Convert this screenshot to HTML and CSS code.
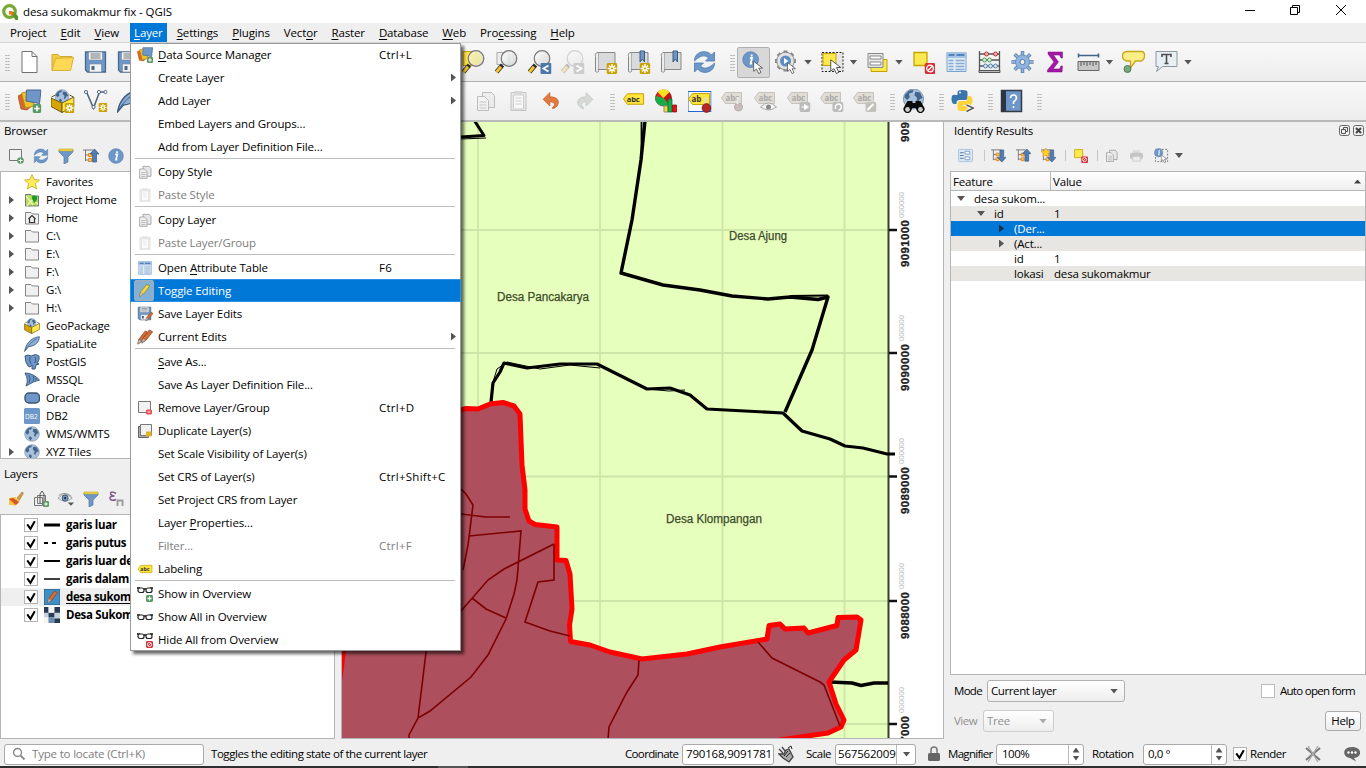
FILE: index.html
```html
<!DOCTYPE html>
<html lang="en">
<head>
<meta charset="utf-8">
<title>desa sukomakmur fix - QGIS</title>
<link rel="stylesheet" href="styles.css">
</head>
<body>
<svg class="defs" width="0" height="0">
<defs>
<linearGradient id="glass" x1="0" y1="0" x2="1" y2="1"><stop offset="0" stop-color="#fff"/><stop offset="1" stop-color="#cfd3d3"/></linearGradient>
<symbol id="new" viewBox="0 0 24 24"><path d="M4.500 1.500h10l5 5v16h-15z" fill="#fff" stroke="#707070"/><path d="M14.500 1.500v5h5" fill="none" stroke="#707070"/></symbol>
<symbol id="open" viewBox="0 0 24 24"><path d="M1.500 20V4.500h6l2 2h12V10" fill="#f2cb45" stroke="#d0a92f"/><path d="M1.500 20.500L5 8.500l18-1-3 13z" fill="#ffd955" stroke="#d9b236"/></symbol>
<symbol id="save" viewBox="0 0 24 24"><path d="M2 2h20v20H4l-2-2z" fill="#6c97c8" stroke="#4b688b" stroke-width="1.300"/><path d="M5 2h14v8H5zM6 14h12v8H6z" fill="#f3f3f3" stroke="#75879a" stroke-width=".6"/><path d="M7 4h10M7 6h10M7 8h10" stroke="#74777a"/><path d="M8 16h3v4H8z" fill="#4b688b"/></symbol>
<symbol id="plus" viewBox="0 0 10 10"><rect width="10" height="10" rx="2" fill="#5a9a63"/><path d="M5 2v6M2 5h6" stroke="#fff" stroke-width="1.800"/></symbol>
<symbol id="star" viewBox="0 0 10 10"><rect width="10" height="10" rx="1.500" fill="#c9a200"/><path d="M5 1v8M1 5h8M2.300 2.300l5.400 5.400M7.700 2.300L2.300 7.700" stroke="#fff" stroke-width="1.300"/><circle cx="5" cy="5" r="1" fill="#c9a200"/></symbol>
<symbol id="forbid" viewBox="0 0 10 10"><rect width="10" height="10" rx="2" fill="#d32f35"/><circle cx="5" cy="5" r="3" fill="none" stroke="#fff" stroke-width="1.200"/><path d="M3 7l4-4" stroke="#fff" stroke-width="1.200"/></symbol>
<symbol id="dsm" viewBox="0 0 24 24"><path d="M.5 7l8-4 8 12-7 6-6-1z" fill="#d5692b" stroke="#a34a17" stroke-width=".7"/><path d="M4 4l9-2 4 15-9 2z" fill="#f0c428" stroke="#a88510" stroke-width=".7"/><path d="M9 1h14.500l-1.500 13.500L8.500 12z" fill="#6c97c8" stroke="#4b688b"/><use href="#plus" x="15" y="15" width="9" height="9"/></symbol>
<symbol id="globe" viewBox="0 0 24 24"><circle cx="12" cy="12" r="11" fill="#a9c0da" stroke="#7b93ad"/><path d="M3 7l4-4 5-1-1 3-4 1 1 4-3 3-3-3zM14 4l5 1 3 6-3 1-2 4-2-1 1-4-3-3zM9 15l3 3-2 4-3-4z" fill="#42648d"/></symbol>
<symbol id="geopkg" viewBox="0 0 24 24"><use href="#globe" x="4" y="0" width="15" height="15"/><path d="M.5 9l11 5v9.500l-11-6z" fill="#d6a500" stroke="#6b5718"/><path d="M11.500 14L23.500 8v9l-12 6.500z" fill="#ffe84a" stroke="#6b5718"/><path d="M1 8l4-2M23 8l-4-2" stroke="#6b5718"/></symbol>
<symbol id="newgeo" viewBox="0 0 24 24"><use href="#geopkg" width="24" height="24"/><use href="#star" x="14" y="14" width="10" height="10"/></symbol>
<symbol id="vec" viewBox="0 0 24 24"><path d="M3 3l7 16L16 3h6" fill="none" stroke="#50677e" stroke-width="1.600"/><g fill="#fff" stroke="#50677e"><circle cx="2.500" cy="3" r="1.600"/><circle cx="10" cy="18" r="1.600"/><circle cx="15.500" cy="3" r="1.600"/><circle cx="22" cy="3" r="1.600"/></g><use href="#star" x="15" y="14" width="9" height="9"/></symbol>
<symbol id="feather" viewBox="0 0 24 24"><path d="M1 23C3 12 9 3 23 1c0 8-6 14-16 15z" fill="#8db0d6" stroke="#3f5c7d" stroke-width="1.300"/><path d="M1 23C6 14 11 9 19 4" fill="none" stroke="#3f5c7d"/></symbol>
<symbol id="lens" viewBox="0 0 24 24"><path d="M2 22l6-7" stroke="#2c2c2c" stroke-width="4.500"/><path d="M2 22l4.500-5.200" stroke="#f3c529" stroke-width="3"/><circle cx="14.500" cy="8.500" r="7.800" fill="url(#glass)" fill-opacity=".85" stroke="#777" stroke-width="1.200"/></symbol>
<symbol id="zlayer" viewBox="0 0 24 24"><path d="M1.500 1.500h14v14h-14z" fill="#ffe548" stroke="#c9a200"/><use href="#lens" width="24" height="24"/><circle cx="14.500" cy="8.500" r="6.500" fill="#f6ec8c" opacity=".6"/></symbol>
<symbol id="znative" viewBox="0 0 24 24"><path d="M2.500 2.500h12v12h-12z" fill="#eee" stroke="#aaa"/><use href="#lens" width="24" height="24"/></symbol>
<symbol id="zlast" viewBox="0 0 24 24"><use href="#lens" width="24" height="24"/><rect x="13" y="13" width="11" height="11" rx="1" fill="#4b78a9"/><path d="M21 15.500l-5 3 5 3" fill="none" stroke="#fff" stroke-width="1.800"/></symbol>
<symbol id="znext" viewBox="0 0 24 24"><g opacity=".28"><use href="#lens" width="24" height="24"/></g><rect x="13" y="13" width="11" height="11" rx="1" fill="#ccc"/><path d="M16 15.500l5 3-5 3" fill="none" stroke="#fff" stroke-width="1.800"/></symbol>
<symbol id="book" viewBox="0 0 24 24"><path d="M4.500 2.500h17v17h-17z" fill="#d9dadb" stroke="#888"/><path d="M4.500 2.500c-3 0-3 3-2.500 4v15c3 2 4-1 2.500-2" fill="#ececec" stroke="#888"/></symbol>
<symbol id="bmmap" viewBox="0 0 24 24"><use href="#book" width="24" height="24"/><use href="#star" x="13" y="13" width="11" height="11"/></symbol>
<symbol id="bmk" viewBox="0 0 24 24"><use href="#book" width="24" height="24"/><path d="M13.500 1h4.500v11l-2.200-3-2.300 3z" fill="#6c97c8" stroke="#3c5a7e"/></symbol>
<symbol id="bmnew" viewBox="0 0 24 24"><use href="#bmk" width="24" height="24"/><use href="#star" x="13" y="13" width="11" height="11"/></symbol>
<symbol id="refresh" viewBox="0 0 24 24"><path d="M2 11C2 1 14-1 19 5l3-3v9h-9l3-3c-4-4-9-2-14 3zM22 13c0 10-12 12-17 6l-3 3v-9h9l-3 3c4 4 9 2 14-3z" fill="#6c97c8" stroke="#4c78ac" stroke-width=".8"/></symbol>
<symbol id="cursor" viewBox="0 0 12 12"><path d="M1 1v9l2.500-2 2 4 2-1-2-3.800H9z" fill="#fff" stroke="#555" stroke-width=".8"/></symbol>
<symbol id="info" viewBox="0 0 24 24"><circle cx="12" cy="12" r="11" fill="#6c97c8" stroke="#5782b3"/><path d="M11 9.500h3l-2 8h2M13.500 5v2.500" fill="none" stroke="#fff" stroke-width="2.500"/></symbol>
<symbol id="identify" viewBox="0 0 24 24"><use href="#info" width="18" height="18"/><use href="#cursor" x="11" y="9" width="14" height="15"/></symbol>
<symbol id="gear" viewBox="0 0 24 24"><g stroke="#5579a7" stroke-width="3.500"><path d="M12 1v22M1 12h22M4.200 4.200l15.600 15.600M19.800 4.200L4.200 19.800"/></g><g stroke="#8fb3de" stroke-width="2"><path d="M12 1.500v21M1.500 12h21M4.500 4.500l15 15M19.500 4.500l-15 15"/></g><circle cx="12" cy="12" r="7" fill="#8fb3de" stroke="#6d94c4"/><circle cx="12" cy="12" r="2.500" fill="#f3f3f3" stroke="#5579a7"/></symbol>
<symbol id="action" viewBox="0 0 24 24"><g stroke="#888" stroke-width="4"><path d="M11 .5v21M.5 11h21M3.600 3.600l14.800 14.800M18.400 3.600L3.600 18.400"/></g><circle cx="11" cy="11" r="8.800" fill="#e2e2e2" stroke="#8c8c8c"/><circle cx="11" cy="11" r="5.500" fill="#5d8dc2"/><path d="M9.500 8l4.500 3-4.500 3z" fill="#fff"/><use href="#cursor" x="12" y="11" width="12" height="13"/></symbol>
<symbol id="select" viewBox="0 0 24 24"><path d="M1.500 2.500h21v19h-21z" fill="#e6e6e6" stroke="#222" stroke-dasharray="2 1.500"/><path d="M2.500 3.500h13v12h-13z" fill="#fce94f" stroke="#c9a200"/><use href="#cursor" x="9" y="8" width="15" height="16"/></symbol>
<symbol id="selform" viewBox="0 0 24 24"><path d="M5.500 9.500h16v12h-16z" fill="#fce94f" stroke="#c9a200"/><path d="M2.500 3.500h15v14h-15z" fill="#e8e8e8" stroke="#888"/><path d="M4.500 6h11v3h-11zM4.500 12h11v3h-11z" fill="#fff" stroke="#888"/></symbol>
<symbol id="desel" viewBox="0 0 24 24"><path d="M2.500 2.500h13v13h-13z" fill="#fce94f" stroke="#c9a200" stroke-width="1.300"/><use href="#forbid" x="13" y="13" width="11" height="11"/></symbol>
<symbol id="table" viewBox="0 0 24 24"><path d="M2.500 2.500h19v19h-19z" fill="#e1edf5" stroke="#7ba3cf"/><path d="M2 2h20v6H2z" fill="#a5c4e5"/><path d="M4 5h6M12 5h8" stroke="#5482b8" stroke-width="2"/><path d="M4 10.500h5M11 10.500h9M4 13.500h5M11 13.500h9M4 16.500h5M11 16.500h9M4 19.500h5M11 19.500h9" stroke="#86aad4" stroke-width="1.300"/></symbol>
<symbol id="abacus" viewBox="0 0 24 24"><path d="M2 1v20M22 1v20M2 4h20M2 10h20M2 16h20" fill="none" stroke="#555" stroke-width="1.300"/><path d="M1.500 20.500h21v2h-21z" fill="#bbb" stroke="#555"/><g stroke="#b42b2b" fill="#f5b4b4"><circle cx="9" cy="4" r="2"/><circle cx="18" cy="4" r="2"/></g><g stroke="#579559" fill="#d3efd3"><circle cx="7" cy="10" r="2"/><circle cx="12" cy="10" r="2"/></g><g stroke="#5482a8" fill="#d3e5f3"><circle cx="8" cy="16" r="2"/><circle cx="13" cy="16" r="2"/><circle cx="18" cy="16" r="2"/></g></symbol>
<symbol id="sigma" viewBox="0 0 24 24"><path d="M4.500 2H19v6h-1.500L16 5h-6l5 7-5.500 7h6.500l1.500-3H19l-.5 6H4v-2l6.500-8-6-8z" fill="#a616a8" stroke="#6d0f6e" stroke-width=".5"/></symbol>
<symbol id="ruler" viewBox="0 0 24 24"><path d="M2 5.500h20M2 3.500v4M22 3.500v4" stroke="#426287" stroke-width="1.600"/><path d="M1.500 11.500h21v9h-21z" fill="#c7c7c7" stroke="#666"/><path d="M4.500 12v4M7.500 12v3M10.500 12v4M13.500 12v3M16.500 12v4M19.500 12v3" stroke="#555"/></symbol>
<symbol id="tip" viewBox="0 0 24 24"><path d="M5 1.500h15q3 0 3 4t-3 5.500h-6l-5 7v-7H5q-4-1-4-5t4-4.500z" fill="#fbee87" stroke="#c6a51d" stroke-width="1.300"/><circle cx="6" cy="19" r="3.500" fill="#78a97a" stroke="#4d7d50"/></symbol>
<symbol id="textann" viewBox="0 0 24 24"><path d="M1.500 1.500h21v15H8l-6 5 2-5H1.500z" fill="#e9f0f4" stroke="#8b969d"/><path d="M7.500 7V4.500h9V7M12 4.500v9M10 13.500h4" fill="none" stroke="#4d4d4d" stroke-width="1.600"/></symbol>
<symbol id="copy" viewBox="0 0 24 24"><path d="M9 3.500h9l3 3v12H9z" fill="#e7e7e7" stroke="#888"/><path d="M4 7.500h7l4 4v10H4z" fill="#f3f3f3" stroke="#888"/><path d="M6 13h7M6 16h7M6 19h7" stroke="#999"/></symbol>
<symbol id="paste" viewBox="0 0 24 24"><path d="M4.500 3.500h15v18h-15z" fill="#ddd" stroke="#999"/><path d="M7 6h10v14H7z" fill="#fff" stroke="#aaa"/><path d="M8 2h8v3H8z" fill="#bbb"/><path d="M9 9h6M9 12h6M9 15h6" stroke="#aaa"/></symbol>
<symbol id="undo" viewBox="0 0 24 24"><path d="M2 10l8-8v5c8 0 11 4 10 8-1 4-4 6-7 6l1-2c3-2 2-6-4-6v5z" fill="#e07a3f" stroke="#c86228"/></symbol>
<symbol id="redo" viewBox="0 0 24 24"><path d="M22 10l-8-8v5C6 7 3 11 4 15c1 4 4 6 7 6l-1-2c-3-2-2-6 4-6v5z" fill="#d5dad6" stroke="#c3c9c4"/></symbol>
<symbol id="tag" viewBox="0 0 24 24"><path d="M1.500 12l4-5.500h17v11h-17z" fill="#ffe43d" stroke="#c5a300"/><text x="5" y="15" class="icon-text">abc</text></symbol>
<symbol id="diagram" viewBox="0 0 24 24"><circle cx="9" cy="9" r="8" fill="#f02018" stroke="#222" stroke-width=".6"/><path d="M9 9V1A8 8 0 0 1 15 14z" fill="#c41212"/><path d="M9 9L1 7A8 8 0 0 0 14 15z" fill="#18ab48"/><path d="M9 9L3 3a8 8 0 0 1 12 0z" fill="#f7df22"/><path d="M9.500 17h4v6h-4z" fill="#f7df22" stroke="#987"/><path d="M13.500 10h4v13h-4z" fill="#18ab48" stroke="#064" stroke-width=".7"/><path d="M18 16h4v7h-4z" fill="#e31414" stroke="#800" stroke-width=".7"/></symbol>
<symbol id="pinlabel" viewBox="0 0 24 24"><rect x=".5" y="2.500" width="23" height="20" fill="#fbfbfb" stroke="#1e66d0"/><path d="M1 10l4-5.500h17v11H5z" fill="#ffe43d" stroke="#c5a300"/><text x="4" y="13" class="icon-text">ab</text><path d="M18 8v9" stroke="#ddd" stroke-width="2"/><circle cx="19" cy="19" r="4.300" fill="#b52727" stroke="#841919"/></symbol>
<symbol id="gtag" viewBox="0 0 24 24"><path d="M1 9l4-5.500h16v11H5z" fill="#dfddd5" stroke="#c4c2ba"/><text x="5" y="12" class="icon-text faint">abc</text></symbol>
<symbol id="gpin" viewBox="0 0 24 24"><use href="#gtag" width="24" height="24"/><circle cx="18" cy="18" r="4" fill="#cbbcbc" stroke="#b8abab"/><path d="M17 8v7" stroke="#eee" stroke-width="2"/></symbol>
<symbol id="geye" viewBox="0 0 24 24"><use href="#gtag" width="24" height="24"/><path d="M7 18q8-8 16 0q-8 6-16 0z" fill="#f4f4f4" stroke="#aaa"/><circle cx="15" cy="18" r="2.500" fill="#888"/></symbol>
<symbol id="gmove" viewBox="0 0 24 24"><use href="#gtag" width="24" height="24"/><rect x="13" y="13" width="11" height="10" rx="2" fill="#bbb"/><path d="M15 18h4M18 15.500l4 2.500-4 2.500z" fill="#fff" stroke="#fff"/></symbol>
<symbol id="grot" viewBox="0 0 24 24"><use href="#gtag" width="24" height="24"/><rect x="13" y="13" width="11" height="10" rx="2" fill="#bbb"/><path d="M16 20v-3a3 3 0 1 1 3 4" fill="none" stroke="#fff" stroke-width="1.500"/></symbol>
<symbol id="gedit" viewBox="0 0 24 24"><use href="#gtag" width="24" height="24"/><rect x="13" y="13" width="11" height="10" rx="2" fill="#c2c1bb"/><path d="M15 21l6-6" stroke="#fff" stroke-width="2"/></symbol>
<symbol id="search3" viewBox="0 0 24 24"><use href="#globe" x="1" y="-1" width="22" height="22"/><path d="M6 12h5v2h3v-2h5l4 7a4 4 0 1 1-8 2l-1-2h-3l-1 2a4 4 0 1 1-8-2z" fill="#0b0b0b"/><circle cx="6" cy="20.500" r="2.400" fill="#ccc"/><circle cx="19" cy="20.500" r="2.400" fill="#ccc"/></symbol>
<symbol id="python" viewBox="0 0 24 24"><path d="M7 6V3q0-2 5-2t5 2v6q0 2-2 2H9q-3 0-3 3v1H4q-3 0-3-5t4-4h7" fill="#3a76ab"/><path d="M17 7h2q3 0 3 5t-4 4h-6v1h5v3q0 2-5 2t-5-2v-5q0-3 3-3h5q2 0 2-3z" fill="#ffd43b"/><circle cx="9.500" cy="3.500" r=".9" fill="#fff"/><path d="M16 16l7 3-7 3.500" fill="none" stroke="#fff" stroke-width="3"/><path d="M16 16l7 3-7 3.500" fill="none" stroke="#555" stroke-width="1.400"/></symbol>
<symbol id="help" viewBox="0 0 24 24"><path d="M2 1.500h20v21H2z" fill="#6c97c8" stroke="#333b46" stroke-width="1.500"/><path d="M2 1.500h4.500v21H2z" fill="#2c3543"/><path d="M11 9q0-3 3-3t3 3q0 2-3 4v2M14 17v2" fill="none" stroke="#fff" stroke-width="1.600"/></symbol>
<symbol id="addsq" viewBox="0 0 16 16"><path d="M1.500 1.500h12v11h-12z" fill="#f2f2f2" stroke="#777"/><circle cx="12.500" cy="12.500" r="3.300" fill="#5a9a63"/><path d="M12.500 10.500v4M10.500 12.500h4" stroke="#fff"/></symbol>
<symbol id="filter" viewBox="0 0 16 16"><path d="M1 2h14v2L10 9v5l-4 2V9L1 4z" fill="#6c97c8" stroke="#55799f" stroke-width=".7"/><path d="M1 1h14v2H1z" fill="#f5d946" stroke="#b9a12a" stroke-width=".6"/></symbol>
<symbol id="treebits" viewBox="0 0 16 16"><path d="M0 2h10M2.500 2v11M2.500 7H6M2.500 12H6" fill="none" stroke="#777"/><path d="M5.500 5.500h3v3h-3zM5.500 10.500h3v3h-3z" fill="#ffca72" stroke="#e98719"/></symbol>
<symbol id="collapse" viewBox="0 0 16 16"><use href="#treebits" width="16" height="16"/><path d="M11.500 1L16 6h-2.500v8h-4V6H7z" fill="#4f7cb3" stroke="#375a85" stroke-width=".7"/></symbol>
<symbol id="expand" viewBox="0 0 16 16"><use href="#treebits" width="16" height="16"/><path d="M11.500 15L16 10h-2.500V2h-4v8H7z" fill="#4f7cb3" stroke="#375a85" stroke-width=".7"/></symbol>
<symbol id="expnew" viewBox="0 0 16 16"><use href="#expand" width="16" height="16"/><path d="M5 0l1.500 3 3.500.5-2.500 2.300.6 3.200L5 7.500 2 9l.5-3.200L0 3.500 3.500 3z" fill="#ffd42b" stroke="#ef8f13" stroke-width=".6"/></symbol>
<symbol id="fav" viewBox="0 0 16 16"><path d="M8 .5l2.200 5 5.300.5-4 3.600 1.200 5.400L8 12.200 3.300 15l1.200-5.400-4-3.600 5.300-.5z" fill="#fcec5b" stroke="#c9a51d" stroke-width=".8"/></symbol>
<symbol id="folder" viewBox="0 0 16 16"><path d="M1.500 14V2.500h5.500l1.500 1.500h6V14z" fill="#f0f0f0" stroke="#858585"/></symbol>
<symbol id="phome" viewBox="0 0 16 16"><path d="M1.500 14V2.500h5.500l1.500 1.500h6V14z" fill="#b6dd61" stroke="#777"/><path d="M2 4l7 9M3 14l5-6 6 4" stroke="#f4f5b0" stroke-width="1.300" fill="none"/><path d="M10.500 11C6 5 8 3.500 10.500 3.500S15 6 10.500 11z" fill="#1d9c25"/></symbol>
<symbol id="home" viewBox="0 0 16 16"><use href="#folder" width="16" height="16"/><path d="M4.500 9L8 5.500 11.500 9M5.500 8.500v4h5v-4" fill="none" stroke="#333" stroke-width="1.200"/></symbol>
<symbol id="eleph" viewBox="0 0 16 16"><path d="M1 2q3-2 6 0 5-3 8 0 1 4-2 7l2 1-3 1-1 4H8V11L6 13 4 12Q1 8 1 2z" fill="#6c97c8" stroke="#3f5c7d"/><path d="M6 3q-1 4 1 7M11 3q2 3 0 6" fill="none" stroke="#3f5c7d"/></symbol>
<symbol id="mssql" viewBox="0 0 16 16"><path d="M1 1Q9 1 15.500 8 10 9 2 14 5 8 1 1z" fill="#6c97c8" stroke="#3f5c7d"/><path d="M5 3q2 4 0 8M9 4q2 3 0 5M12 6v2" fill="none" stroke="#3f5c7d"/></symbol>
<symbol id="oracle" viewBox="0 0 16 16"><rect x="1" y="3" width="14.500" height="10" rx="4" fill="#6c97c8" stroke="#3b5472" stroke-width="1.400"/></symbol>
<symbol id="db2" viewBox="0 0 16 16"><rect width="16" height="16" rx="1.500" fill="#6c97c8"/><text x="1" y="10.500" class="db2-text">DB2</text></symbol>
<symbol id="pencil" viewBox="0 0 16 16"><path d="M3 15l1-5 7-9 3.500 2-7 9z" fill="#f3d648" stroke="#8f7a22" stroke-width=".8"/><path d="M3 15l1-5 3 2z" fill="#d9d0b0" stroke="#777" stroke-width=".5"/></symbol>
<symbol id="rpencil" viewBox="0 0 16 16"><path d="M3 15l1-5 7-9 3.500 2-7 9z" fill="#cf6c37" stroke="#8d4421" stroke-width=".8"/><path d="M3 15l1-5 3 2z" fill="#bfc2c2" stroke="#777" stroke-width=".5"/></symbol>
<symbol id="edits" viewBox="0 0 16 16"><use href="#rpencil" x="-2" y="1" width="15" height="15"/><use href="#rpencil" x="2" y="0" width="15" height="15"/></symbol>
<symbol id="savee" viewBox="0 0 16 16"><use href="#save" width="15" height="15"/><use href="#rpencil" x="7" y="5" width="10" height="11"/></symbol>
<symbol id="remove" viewBox="0 0 16 16"><path d="M1.500 1.500h12v11h-12z" fill="#f2f2f2" stroke="#777"/><rect x="9" y="9.500" width="6" height="5" rx="1.500" fill="#e94a50"/><path d="M10.500 12h3" stroke="#fff"/></symbol>
<symbol id="dup" viewBox="0 0 16 16"><path d="M1.500 3.500h10v11h-10z" fill="#aaa" stroke="#666"/><path d="M3.500 1.500h11v11h-11z" fill="#f2f2f2" stroke="#777"/><path d="M9 8.500h5.500v5H9z" fill="#ddb421"/></symbol>
<symbol id="glasses" viewBox="0 0 16 16"><path d="M0 6h3M7 7h2M13 6h3" stroke="#111" stroke-width="1.300" fill="none"/><rect x="1" y="6" width="6" height="4.500" rx="2" fill="#fff" stroke="#222" stroke-width="1.200"/><rect x="9" y="6" width="6" height="4.500" rx="2" fill="#fff" stroke="#222" stroke-width="1.200"/></symbol>
<symbol id="showov" viewBox="0 0 16 16"><use href="#glasses" y="-4" width="16" height="16"/><use href="#plus" x="9" y="9" width="7" height="7"/></symbol>
<symbol id="hideov" viewBox="0 0 16 16"><use href="#glasses" y="-4" width="16" height="16"/><use href="#forbid" x="9" y="9" width="7" height="7"/></symbol>
<symbol id="brush" viewBox="0 0 16 16"><path d="M9 7l5-6 1.500 1-4 7z" fill="#d49a3e" stroke="#9d6d20" stroke-width=".5"/><path d="M1 7l6-1 5 4-5 5-2-1-4 0z" fill="#f2c23a"/><path d="M1 8l4-1 6 4-3 3z" fill="#d9502b"/></symbol>
<symbol id="addgrp" viewBox="0 0 16 16"><path d="M1.500 6.500h8v8h-8zM4.500 4.500h8v8h-8z" fill="#eee" stroke="#777"/><path d="M7 12V3l2-3 2 3v9" fill="none" stroke="#555"/><use href="#plus" x="10" y="10" width="6" height="6"/></symbol>
<symbol id="eye" viewBox="0 0 18 16"><path d="M0 7Q8-1 16 7 8 14 0 7z" fill="#eee" stroke="#999"/><path d="M1 4q7-5 14 1" fill="none" stroke="#888"/><circle cx="8" cy="7" r="3.500" fill="#6c97c8" stroke="#456"/><circle cx="8" cy="7" r="1.200" fill="#222"/><path d="M11 12h7l-3.500 3.500z" fill="#555"/></symbol>
<symbol id="eps" viewBox="0 0 16 16"><path d="M8 2.500Q3-.5 2.500 2.500q0 2 4 2.500-5 0-4.500 2.500 1 3 6 1" fill="none" stroke="#7c5a86" stroke-width="1.500"/><path d="M9.500 15V9.500h5V15M9.500 12v3M14.500 12v3" fill="none" stroke="#999" stroke-width="1.800"/></symbol>
<symbol id="formv" viewBox="0 0 16 16"><rect x=".5" y="1.500" width="15" height="13" rx="1" fill="#dce8f4" stroke="#a9c2dd"/><path d="M2 5h4M2 8h4M2 11h4" stroke="#57799f"/><path d="M7.500 3.500h5v3h-5zM7.500 9.500h5v3h-5z" fill="#fff" stroke="#7f9fc2"/></symbol>
<symbol id="print" viewBox="0 0 16 16"><path d="M4 2h8v4H4z" fill="#ddd"/><rect x="1" y="5" width="14" height="7" rx="2.500" fill="#c4c4c4"/><path d="M4 9h8v5H4z" fill="#ececec" stroke="#ccc"/></symbol>
<symbol id="idsel" viewBox="0 0 16 16"><path d="M1.500 1.500h13v13h-13z" fill="none" stroke="#777" stroke-dasharray="2 1.500"/><use href="#info" width="10" height="10"/><use href="#cursor" x="7" y="6" width="9" height="10"/></symbol>
<symbol id="raster" viewBox="0 0 14 14"><path d="M0 0h14v14H0z" fill="#c6d1e0"/><path d="M0 0h4v5H0zM9 0h5v5H9zM4 5h5v4H4zM9 10h5v4H9z" fill="#283b55"/><path d="M4 0h5v5H4zM0 9h4v5H0z" fill="#f4f4f0"/><path d="M4 9h5v5H4z" fill="#6d8cb3"/></symbol>
<symbol id="tick" viewBox="0 0 13 13"><path d="M.5.500h12v12H.5z" fill="#fff" stroke="#b5b5b5"/><path d="M3 6l3 4 4-7" fill="none" stroke="#000" stroke-width="1.900"/></symbol>
</defs>
</svg>

<div class="app">
<header class="titlebar">
  <svg class="logo" viewBox="0 0 16 16"><circle cx="7.500" cy="7.500" r="5.800" fill="none" stroke="#74a933" stroke-width="3.200"/><path d="M8 8h4l4 4v4h-2.500z" fill="#589632"/><path d="M7 7l4 0-1 1 2 2-2 2-2-2-1 1z" fill="#ee7913"/></svg>
  <span class="grow">desa sukomakmur fix - QGIS</span>
  <svg class="winbtns" viewBox="0 0 102 12"><path d="M0 6.500h10M45.500 3.500h7v7h-7zM47.500 3.500v-2h7v7h-2M91 1l10 10M101 1L91 11" fill="none" stroke="#000"/></svg>
</header>
<nav class="menubar">
  <span>Pro<u>j</u>ect</span><span><u>E</u>dit</span><span><u>V</u>iew</span><span class="active"><u>L</u>ayer</span><span><u>S</u>ettings</span><span><u>P</u>lugins</span><span>Vect<u>o</u>r</span><span><u>R</u>aster</span><span><u>D</u>atabase</span><span><u>W</u>eb</span><span>Pro<u>c</u>essing</span><span><u>H</u>elp</span>
</nav>
<div class="toolbar">
  <i class="handle first"></i>
  <svg><use href="#new"/></svg><svg><use href="#open"/></svg><svg><use href="#save"/></svg><svg><use href="#save"/></svg>
  <i class="gap-a"></i>
  <svg><use href="#zlayer"/></svg><svg><use href="#znative"/></svg><svg><use href="#zlast"/></svg><svg><use href="#znext"/></svg><svg><use href="#bmmap"/></svg><svg><use href="#bmnew"/></svg><svg><use href="#bmk"/></svg><svg><use href="#refresh"/></svg>
  <i class="handle"></i>
  <svg class="on"><use href="#identify"/></svg><svg><use href="#action"/></svg><b class="dd"></b><svg><use href="#select"/></svg><b class="dd"></b><svg><use href="#selform"/></svg><b class="dd"></b><svg><use href="#desel"/></svg><svg><use href="#table"/></svg><svg><use href="#abacus"/></svg><svg><use href="#gear"/></svg><svg><use href="#sigma"/></svg><svg><use href="#ruler"/></svg><b class="dd"></b><svg><use href="#tip"/></svg><svg><use href="#textann"/></svg><b class="dd"></b>
</div>
<div class="toolbar second">
  <i class="handle first"></i>
  <svg><use href="#dsm"/></svg><svg><use href="#newgeo"/></svg><svg><use href="#vec"/></svg><svg><use href="#feather"/></svg>
  <i class="gap-b"></i>
  <svg class="dim"><use href="#copy"/></svg><svg class="dim"><use href="#paste"/></svg><svg class="sm"><use href="#undo"/></svg><svg class="sm"><use href="#redo"/></svg>
  <i class="handle"></i>
  <svg class="lbl"><use href="#tag"/></svg><svg><use href="#diagram"/></svg><svg><use href="#pinlabel"/></svg><svg><use href="#gpin"/></svg><svg><use href="#geye"/></svg><svg><use href="#gmove"/></svg><svg><use href="#grot"/></svg><svg><use href="#gedit"/></svg>
  <i class="handle"></i><svg><use href="#search3"/></svg>
  <i class="handle"></i><svg><use href="#python"/></svg>
  <i class="handle"></i><svg><use href="#help"/></svg>
  <i class="handle"></i>
</div>

<main class="work">
  <aside class="left">
    <h2>Browser</h2>
    <div class="minibar"><svg><use href="#addsq"/></svg><svg><use href="#refresh"/></svg><svg><use href="#filter"/></svg><svg><use href="#collapse"/></svg><svg><use href="#info"/></svg></div>
    <ul class="tree browser">
      <li><i></i><svg><use href="#fav"/></svg>Favorites</li>
      <li><i class="r"></i><svg><use href="#phome"/></svg>Project Home</li>
      <li><i class="r"></i><svg><use href="#home"/></svg>Home</li>
      <li><i class="r"></i><svg><use href="#folder"/></svg>C:\</li>
      <li><i class="r"></i><svg><use href="#folder"/></svg>E:\</li>
      <li><i class="r"></i><svg><use href="#folder"/></svg>F:\</li>
      <li><i class="r"></i><svg><use href="#folder"/></svg>G:\</li>
      <li><i class="r"></i><svg><use href="#folder"/></svg>H:\</li>
      <li><i></i><svg><use href="#geopkg"/></svg>GeoPackage</li>
      <li><i></i><svg><use href="#feather"/></svg>SpatiaLite</li>
      <li><i></i><svg><use href="#eleph"/></svg>PostGIS</li>
      <li><i></i><svg><use href="#mssql"/></svg>MSSQL</li>
      <li><i></i><svg><use href="#oracle"/></svg>Oracle</li>
      <li><i></i><svg><use href="#db2"/></svg>DB2</li>
      <li><i></i><svg><use href="#globe"/></svg>WMS/WMTS</li>
      <li><i class="r"></i><svg><use href="#globe"/></svg>XYZ Tiles</li>
    </ul>
    <h2 class="second">Layers</h2>
    <div class="minibar layersbar"><svg><use href="#brush"/></svg><svg><use href="#addgrp"/></svg><svg><use href="#eye"/></svg><svg><use href="#filter"/></svg><svg><use href="#eps"/></svg></div>
    <ul class="tree layers">
      <li><svg class="chk"><use href="#tick"/></svg><svg viewBox="0 0 16 16"><path d="M0 8h16" stroke="#000" stroke-width="3"/></svg>garis luar</li>
      <li><svg class="chk"><use href="#tick"/></svg><svg viewBox="0 0 16 16"><path d="M0 8h4M8 8h4" stroke="#000" stroke-width="1.800"/></svg>garis putus</li>
      <li><svg class="chk"><use href="#tick"/></svg><svg viewBox="0 0 16 16"><path d="M0 8h16" stroke="#000" stroke-width="2"/></svg>garis luar de</li>
      <li><svg class="chk"><use href="#tick"/></svg><svg viewBox="0 0 16 16"><path d="M0 8h16" stroke="#000" stroke-width="1.500"/></svg>garis dalam</li>
      <li class="cur"><svg class="chk"><use href="#tick"/></svg><svg viewBox="0 0 16 16"><path d="M0 0h16v16H0z" fill="#3f8fc4" stroke="#255d84"/><use href="#rpencil" x="1" y="1" width="14" height="14"/></svg><u>desa sukom</u></li>
      <li><svg class="chk"><use href="#tick"/></svg><svg><use href="#raster"/></svg>Desa Sukom</li>
    </ul>
  </aside>

  <section class="canvas">
    <svg class="map" viewBox="342 122 601 617">
      <path d="M342 122h601v617H342z" fill="#fff"/>
      <path d="M342 122h546v617H342z" fill="#e7ffbc"/>
      <path d="M478 122v617M600 122v617M722.500 122v617M844.500 122v617M342 230h546M342 353h546M342 476.500h546M342 601h546M342 724h546" stroke="#8fa070" stroke-opacity=".27" stroke-width="1.800" fill="none"/>
      <path d="M888.500 122v617" stroke="#35402b" stroke-width="2"/>
      <path d="M889 230h8M889 353h8M889 476.500h8M889 601h8M889 724h8" stroke="#111" stroke-width="2.400"/>
      <g fill="none" stroke="#000" stroke-linejoin="round">
        <path d="M461 137L484 135.500 474 120" stroke-width="3"/><path d="M461 139l25-1" stroke-width="1"/>
        <path d="M645 121L641 160 632 220 621 273 663 285 700 290 732 296 768 299 790 297 818 299.500 828 297 812 350 785 412" stroke-width="3.400"/>
        <path d="M641.500 122v36M790 296l38-.5" stroke-width="1.800"/>
        <path d="M491 402L493 383 500 372 504 363 527 368 560 364 597 364 633 382 647 389 670 388 690 395 707 409 783 413 802 431 830 439 845 446 863 448 887 454 895 454" stroke-width="3.200"/>
        <path d="M492 385L497 369 507 362 540 369 570 365 600 368M646 389l23 2 16-1" stroke-width="1"/>
        <path d="M830 682L852 683 861 685.500 874 683 888 683" stroke-width="3.400"/>
      </g>
      <path d="M461 410L466 408.500 478 409 490 404 503 402.500 514 406 520 414 522 465 525 490 525 509 529 521 535 524.500 557 527 557 560 566 560.500 570 574 572 609 569.500 625 570.500 641.500 590 645 610 652 642 659 687 654 720 647 767 639 769 625.500 780 624 785 629 804 628 808 633 837 625.500 838 617.500 857 617 861 620 856 650 844 660 829 682 836 704 844 720 841 727 828 733 780 740 760 750 330 750 341 670 345 640 360 430z" fill="#ad4f5d" stroke="#f00" stroke-width="5" stroke-linejoin="round"/>
      <path d="M461 489L466 494 473 505 468 545 463 570M461 514L486 517H510M469 536L521 531 517 580 514 594 506 619 488 655 471 677 430 711 418 718M554 544L504 569 488 580 461 611M472 598L486 609 506 618M554 544L554 580 538 582 525 622 550 631 570 636M427.500 640L418 718 409 735 409 740M639 660L638 675 627 692 609 727 608 740M758 642L772 658 820 682 824 685 840 726" fill="none" stroke="#7d0000" stroke-width="1.600"/>
      <g class="place"><text x="729" y="240" textLength="58" lengthAdjust="spacingAndGlyphs">Desa Ajung</text><text x="497" y="301" textLength="92" lengthAdjust="spacingAndGlyphs">Desa Pancakarya</text><text x="666" y="523" textLength="96" lengthAdjust="spacingAndGlyphs">Desa Klompangan</text></g>
      <g class="coord"><text transform="translate(908.500 142) rotate(-90)" textLength="47">9092000</text><text transform="translate(908.500 267) rotate(-90)" textLength="47">9091000</text><text transform="translate(908.500 391) rotate(-90)" textLength="47">9090000</text><text transform="translate(908.500 514) rotate(-90)" textLength="47">9089000</text><text transform="translate(908.500 639) rotate(-90)" textLength="47">9088000</text><text transform="translate(908.500 763) rotate(-90)" textLength="47">9087000</text></g>
      <g class="ghost"><text transform="translate(904 218) rotate(-90)" textLength="26">000000</text><text transform="translate(904 341) rotate(-90)" textLength="26">000000</text><text transform="translate(904 464) rotate(-90)" textLength="26">000000</text><text transform="translate(904 589) rotate(-90)" textLength="26">000000</text><text transform="translate(904 713) rotate(-90)" textLength="26">000000</text></g>
    </svg>
  </section>

  <aside class="right">
    <div class="dockhead"><h2>Identify Results</h2><svg viewBox="0 0 25 11"><rect x=".5" y=".5" width="10" height="10" rx="2" fill="none" stroke="#666"/><path d="M2.500 4.500h4v4h-4zM4.500 4.500v-2h4v4h-2" fill="none" stroke="#555"/><rect x="14.500" y=".5" width="10" height="10" rx="2" fill="none" stroke="#666"/><path d="M17 3l5 5M22 3l-5 5" stroke="#444" stroke-width="2"/></svg></div>
    <div class="minibar idbar"><svg><use href="#formv"/></svg><s></s><svg><use href="#expand"/></svg><svg><use href="#collapse"/></svg><svg><use href="#expnew"/></svg><s></s><svg><use href="#desel"/></svg><s></s><svg><use href="#copy"/></svg><svg><use href="#print"/></svg><svg><use href="#idsel"/></svg><b class="dd"></b></div>
    <div class="results">
      <div class="rrow head"><span>Feature</span><span>Value</span><i class="up"></i></div>
      <div class="rrow l0"><span><i class="dn"></i>desa sukom...</span><span></span></div>
      <div class="rrow l1 alt"><span><i class="dn"></i>id</span><span>1</span></div>
      <div class="rrow l2 sel"><span><i class="rt"></i>(Der...</span><span></span></div>
      <div class="rrow l2 alt"><span><i class="rt"></i>(Act...</span><span></span></div>
      <div class="rrow l2"><span><i></i>id</span><span>1</span></div>
      <div class="rrow l2 alt"><span><i></i>lokasi</span><span>desa sukomakmur</span></div>
    </div>
    <div class="formrow mode"><label>Mode</label><div class="combo w138">Current layer<i class="dn"></i></div><span class="auto"><i class="box"></i>Auto open form</span></div>
    <div class="formrow view"><label>View</label><div class="combo w71">Tree<i class="dn"></i></div><button>Help</button></div>
  </aside>
</main>

<footer class="status">
  <div class="locator"><svg viewBox="0 0 14 14"><circle cx="5.500" cy="5.500" r="4" fill="none" stroke="#888" stroke-width="1.400"/><path d="M8.500 8.500l4 4" stroke="#888" stroke-width="1.800"/></svg>Type to locate (Ctrl+K)</div>
  <span class="msg">Toggles the editing state of the current layer</span>
  <span class="coordl">Coordinate</span><div class="field f-coord">790168,9091781</div>
  <svg class="ext" viewBox="0 0 16 18"><path d="M1 4l4 4M4 2l3 4M1 9l4 4 6 4 4-5-4-8-3 1-2 4z" fill="#aaa" stroke="#444" stroke-width="1.300"/><path d="M10 3l3-2 1 3M8 12l4-4M6 11l4-5" fill="none" stroke="#222"/></svg>
  <span class="scalel">Scale</span><div class="field f-scale">567562009<i class="split"><b class="dn"></b></i></div>
  <svg class="lock" viewBox="0 0 12 16"><path d="M3 8V4q0-3 3-3t3 3v4" fill="none" stroke="#777" stroke-width="1.500"/><rect x="0" y="7" width="12" height="8" rx="1.500" fill="#666"/></svg>
  <span class="magl">Magnifier</span><div class="field f-mag">100%<i class="spin"></i></div>
  <span class="rotl">Rotation</span><div class="field f-rot">0,0 °<i class="spin"></i></div>
  <svg class="rchk"><use href="#tick"/></svg><span class="renderl">Render</span>
  <svg class="crs" viewBox="0 0 16 16"><path d="M1 2l14 12M1 14L15 2" stroke="#777" stroke-width="2"/><path d="M3 0l10 16M13 0L3 16" stroke="#aaa" stroke-width="1.300"/></svg>
  <svg class="bub" viewBox="0 0 16 16"><path d="M8 1c11 0 10 11 2 11l2 3.500L6 12C-2 11-2 1 8 1z" fill="#666"/><g fill="#fff"><circle cx="4.500" cy="6.500" r="1.200"/><circle cx="8" cy="6.500" r="1.200"/><circle cx="11.500" cy="6.500" r="1.200"/></g></svg>
</footer>
<div class="taskbar"><i></i></div>

<div class="menu">
  <div class="mi"><svg><use href="#dsm"/></svg><span><u>D</u>ata Source Manager</span><kbd>Ctrl+L</kbd></div>
  <div class="mi"><span>Create Layer</span><i class="rt"></i></div>
  <div class="mi"><span>Add Layer</span><i class="rt"></i></div>
  <div class="mi"><span>Embed Layers and Groups...</span></div>
  <div class="mi"><span>Add from Layer Definition File...</span></div>
  <hr>
  <div class="mi"><svg><use href="#copy"/></svg><span>Copy Style</span></div>
  <div class="mi off"><svg><use href="#paste"/></svg><span>Paste Style</span></div>
  <hr>
  <div class="mi"><svg><use href="#copy"/></svg><span>Copy Layer</span></div>
  <div class="mi off"><svg><use href="#paste"/></svg><span>Paste Layer/Group</span></div>
  <hr>
  <div class="mi"><svg><use href="#table"/></svg><span>Open <u>A</u>ttribute Table</span><kbd>F6</kbd></div>
  <div class="mi hot"><svg><use href="#pencil"/></svg><span>Toggle Editing</span></div>
  <div class="mi"><svg><use href="#savee"/></svg><span>Save Layer Edits</span></div>
  <div class="mi"><svg><use href="#edits"/></svg><span>Current Edits</span><i class="rt"></i></div>
  <hr>
  <div class="mi"><span><u>S</u>ave As...</span></div>
  <div class="mi"><span>Save As Layer Definition File...</span></div>
  <div class="mi"><svg><use href="#remove"/></svg><span>Remove Layer/Group</span><kbd>Ctrl+D</kbd></div>
  <div class="mi"><svg><use href="#dup"/></svg><span>Duplicate Layer(s)</span></div>
  <div class="mi"><span>Set Scale Visibility of Layer(s)</span></div>
  <div class="mi"><span>Set CRS of Layer(s)</span><kbd>Ctrl+Shift+C</kbd></div>
  <div class="mi"><span>Set Project CRS from Layer</span></div>
  <div class="mi"><span>Layer <u>P</u>roperties...</span></div>
  <div class="mi off"><span>Filter...</span><kbd>Ctrl+F</kbd></div>
  <div class="mi"><svg><use href="#tag"/></svg><span>Labeling</span></div>
  <hr>
  <div class="mi"><svg><use href="#showov"/></svg><span>Show in Overview</span></div>
  <div class="mi"><svg><use href="#glasses"/></svg><span>Show All in Overview</span></div>
  <div class="mi"><svg><use href="#hideov"/></svg><span>Hide All from Overview</span></div>
</div>
</div>
</body>
</html>
```
FILE: styles.css
```css
* { box-sizing: border-box; }
body { margin: 0; width: 1366px; height: 768px; overflow: hidden; font: 11.5px/16px "Open Sans", "Noto Sans", sans-serif; letter-spacing: -0.18px; color: #000; background: #efefef; }
.defs { position: absolute; }
svg { display: block; flex: none; overflow: hidden; }
i, s, b { display: block; flex: none; }
u { text-underline-offset: 2px; }
.grow { flex: 1; letter-spacing: -0.1px; }
.icon-text { font: bold 8px "Open Sans", sans-serif; letter-spacing: -0.2px; fill: #333; }
.icon-text.faint { fill: #aaa; }
.db2-text { font: 6.500px "Open Sans", sans-serif; fill: #fff; letter-spacing: 0; }
.app { position: relative; display: flex; flex-direction: column; height: 768px; }

.titlebar { height: 23px; background: #fff; display: flex; align-items: center; padding: 0 19px 0 2px; flex: none; }
.logo { width: 16px; height: 16px; margin-right: 5px; }
.winbtns { width: 102px; height: 12px; margin-top: -3px; }
.menubar { height: 20px; display: flex; flex: none; padding-left: 3px; border-bottom: 1px solid #d4d4d4; letter-spacing: -0.14px; }
.menubar span { padding: 2px 7px 0; white-space: nowrap; }
.menubar .active { background: #0078d7; color: #fff; padding: 2px 4px 0; margin: 0 3px 0 4px; }

.toolbar { height: 39px; flex: none; display: flex; align-items: center; background: linear-gradient(#f8f8f8, #ededed); border-bottom: 1px solid #b0b0b0; }
.toolbar.second { height: 40px; border-bottom: 2px solid #b9b9b9; }
.toolbar svg { width: 33px; height: 24px; padding: 0 4.500px; }
.toolbar svg.on { background: #d8d8d8; border: 1px solid #b0b0b0; border-radius: 2px; height: 31px; padding: 3px 3.500px; }
.toolbar svg.dim { opacity: .5; }
.toolbar svg.sm { padding: 2px 6.500px; }
.toolbar svg.lbl { padding: 0 5px; margin-top: -5px; }
.handle { width: 16px; height: 17px; padding-left: 9px; }
.handle.first { width: 13px; padding-left: 5px; }
.handle::before { content: ""; display: block; width: 5px; height: 17px; background: radial-gradient(circle, #aaa 0.7px, transparent 1px) 0 0 / 2.500px 3px; }
.gap-a { width: 312px; }
.gap-b { width: 324px; }
.dd { width: 12.500px; height: 5px; }
.dd::before, .dn { content: ""; display: block; width: 8px; height: 5px; background: #555; clip-path: polygon(0 0, 100% 0, 50% 100%); }
.dd::before { margin-left: 1px; }

.work { flex: 1; display: flex; min-height: 0; }
h2 { font: inherit; margin: 0; padding: 1px 4px 0; height: 19px; }
.left { width: 335px; margin-right: 6px; display: flex; flex-direction: column; }
.minibar { height: 29px; display: flex; align-items: center; padding-left: 8px; gap: 9px; }
.minibar svg { width: 16px; height: 16px; }
.tree { margin: 0; padding: 0; list-style: none; background: #fff; border: 1px solid #b5b5b5; overflow: hidden; }
.tree li { display: flex; height: 18px; align-items: center; white-space: nowrap; line-height: 18px; }
.tree li svg { width: 16px; height: 16px; }
.browser { height: 288px; padding-top: 1px; margin-top: 1px; }
.browser li i { width: 23px; height: 8px; }
.browser li i.r::before { content: ""; display: block; margin-left: 8px; width: 5px; height: 8px; background: #555; clip-path: polygon(0 0, 100% 50%, 0 100%); }
.browser li svg { margin-right: 6px; }
h2.second { padding-top: 7px; height: 25px; }
.layersbar { height: 30px; }
.layers { flex: 1; padding-top: 1px; margin-bottom: 1px; font-weight: 700; letter-spacing: -0.35px; }
.layers li { padding-left: 23px; }
.layers li svg { margin-right: 6px; }
.layers li svg.chk { width: 14px; height: 14px; }
.layers .cur { background: #efefef; }

.canvas { width: 603px; border: 1px solid #b5b5b5; border-top: 0; margin-bottom: 1px; margin-right: 6px; overflow: hidden; }
.map { width: 601px; height: 617px; }
.place { font: 12px "Liberation Sans", Arial, sans-serif; fill: #3d4a2c; stroke: #3d4a2c; stroke-width: .25px; letter-spacing: 0; }
.coord { font: bold 11.500px "Liberation Sans", Arial, sans-serif; fill: #222; stroke: #222; stroke-width: .3px; letter-spacing: 0; }
.ghost { font: 8px "Liberation Sans", Arial, sans-serif; fill: #bbb; letter-spacing: 0; }

.right { flex: 1; display: flex; flex-direction: column; }
.dockhead { display: flex; justify-content: space-between; height: 19px; padding-right: 2px; }
.dockhead svg { width: 25px; height: 11px; margin-top: 3px; }
.idbar { gap: 0; padding-left: 8px; }
.idbar svg { width: 15px; height: 15px; margin-right: 10px; }
.idbar s { width: 1px; height: 11px; background: #c6c6c6; margin: 0 6.500px 0 -1px; }
.idbar svg:first-child { margin-right: 11.500px; }
.idbar .dd { margin-left: -5px; }
.results { height: 504px; margin-top: 1px; background: #fff; border: 1px solid #b5b5b5; }
.rrow { display: grid; grid-template-columns: 100px 1fr; height: 15px; line-height: 15px; }
.rrow span { padding-left: 3px; display: flex; align-items: center; white-space: nowrap; }
.rrow.head { height: 19px; line-height: 19px; background: linear-gradient(#fff, #efefef); border-bottom: 1px solid #b5b5b5; grid-template-columns: 99px 1fr 11px; align-items: center; }
.rrow.head span { padding-left: 2px; }
.rrow.head span + span { border-left: 1px solid #bbb; padding-left: 2px; }
.up { width: 7px; height: 4px; background: #444; clip-path: polygon(0 100%, 100% 100%, 50% 0); }
.rrow i.dn, .rrow span i { width: 8px; margin-right: 9px; }
.l0 span:first-child { padding-left: 6px; }
.l1 span:first-child { padding-left: 26px; }
.l2 span:first-child { padding-left: 46px; }
.rt { width: 5px; height: 8px; background: #555; clip-path: polygon(0 0, 100% 50%, 0 100%); }
.rrow span i.rt { width: 5px; margin: 0 10px 0 2px; }
.alt { background: #e8e6e2; }
.sel { background: #0078d7; color: #fff; }
.sel .rt { background: #12304c; }
.formrow { display: flex; align-items: center; padding-left: 4px; height: 32px; letter-spacing: -0.25px; }
.formrow label { width: 33px; letter-spacing: -0.7px; }
.combo { display: flex; align-items: center; justify-content: space-between; height: 22px; border: 1px solid #b0b0b0; border-radius: 3px; background: linear-gradient(#fff, #ededed); padding: 0 6px 0 3px; white-space: nowrap; }
.w138 { width: 138px; letter-spacing: -0.4px; }
.w71 { width: 71px; }
.view { color: #909090; height: 28px; }
.view label { width: 29px; letter-spacing: -0.5px; }
.view .combo { border-color: #ccc; }
.view .dn { background: #aaa; }
.auto { margin-left: auto; padding-right: 11px; display: flex; align-items: center; white-space: nowrap; letter-spacing: -0.7px; }
.box { width: 14px; height: 14px; background: #fff; border: 1px solid #bbb; margin-right: 5px; }
.view button { margin-left: auto; margin-right: 5px; width: 36px; height: 20px; padding: 0; font: inherit; letter-spacing: -0.4px; border: 1px solid #aaa; border-radius: 3px; background: linear-gradient(#fff, #ececec); color: #000; }

.status { height: 26px; flex: none; display: flex; align-items: center; padding: 2px 6px 0 4px; white-space: nowrap; }
.locator, .field { height: 21px; background: #fff; border: 1px solid #aaa; border-radius: 3px; display: flex; align-items: center; }
.locator { width: 200px; color: #808080; padding-left: 7px; }
.locator svg { width: 14px; height: 14px; margin-right: 6px; }
.msg { margin-left: 7px; width: 414px; letter-spacing: -0.44px; }
.coordl { width: 57px; letter-spacing: -0.65px; }
.field { padding-left: 3px; justify-content: space-between; }
.f-coord { width: 92px; }
.ext { width: 16px; height: 18px; margin: 0 12px 0 4px; }
.scalel { width: 29px; letter-spacing: -0.5px; }
.f-scale { width: 81px; padding-left: 2px; }
.split { border-left: 1px solid #bbb; height: 19px; width: 20px; padding: 7px 0 0 6px; }
.lock { width: 12px; height: 16px; margin: 0 8px 0 12px; }
.magl { width: 48px; letter-spacing: -0.7px; }
.f-mag { width: 88px; padding-left: 5px; letter-spacing: -0.5px; }
.f-rot { width: 84px; padding-left: 4px; letter-spacing: -0.4px; }
.rotl { margin-left: 8px; width: 51px; letter-spacing: -0.5px; }
.spin { width: 15px; height: 19px; border-left: 1px solid #bbb; display: flex; flex-direction: column; align-items: center; justify-content: center; gap: 3px; }
.spin::before, .spin::after { content: ""; width: 7px; height: 5px; background: #555; clip-path: polygon(0 100%, 100% 100%, 50% 0); }
.spin::after { clip-path: polygon(0 0, 100% 0, 50% 100%); }
.rchk { width: 14px; height: 14px; margin: 0 3px 0 6px; }
.renderl { letter-spacing: -0.45px; }
.crs { width: 16px; height: 16px; margin-left: auto; margin-right: 23px; }
.bub { width: 16px; height: 16px; }
.taskbar { height: 2px; background: #2f2f31; flex: none; }
.taskbar i { width: 30px; height: 2px; margin-left: 438px; background: #555; }

.menu { position: absolute; left: 130px; top: 43px; width: 331px; height: 608px; background: #fff; box-shadow: inset 0 0 0 1px #9a9a9a, 3px 3px 3px rgba(0,0,0,.6); letter-spacing: -0.12px; }
.mi { height: 23px; display: grid; grid-template-columns: 28px 221px 1fr 10px; align-items: center; white-space: nowrap; }
.mi svg { grid-column: 1; grid-row: 1; width: 16px; height: 16px; margin-left: 7px; }
.mi span { grid-column: 2; grid-row: 1; }
.mi kbd { grid-column: 3; grid-row: 1; font: inherit; letter-spacing: 0.25px; }
.mi .rt { grid-column: 4; grid-row: 1; }
.mi.off { color: #7d7d7d; }
.mi.off svg { opacity: .4; }
.mi.hot { background: #0078d7; color: #fff; box-shadow: inset 0 0 0 1px #2b92e6; }
.mi.hot svg { width: 20px; height: 21px; padding: 2px; margin-left: 4px; background: #83b0d3; border: 1px solid #a4adb5; border-radius: 2px; }
.menu hr { margin: 0 6px 0 5px; height: 2px; border: 0; border-top: 1px solid #bdbdbd; }
```
